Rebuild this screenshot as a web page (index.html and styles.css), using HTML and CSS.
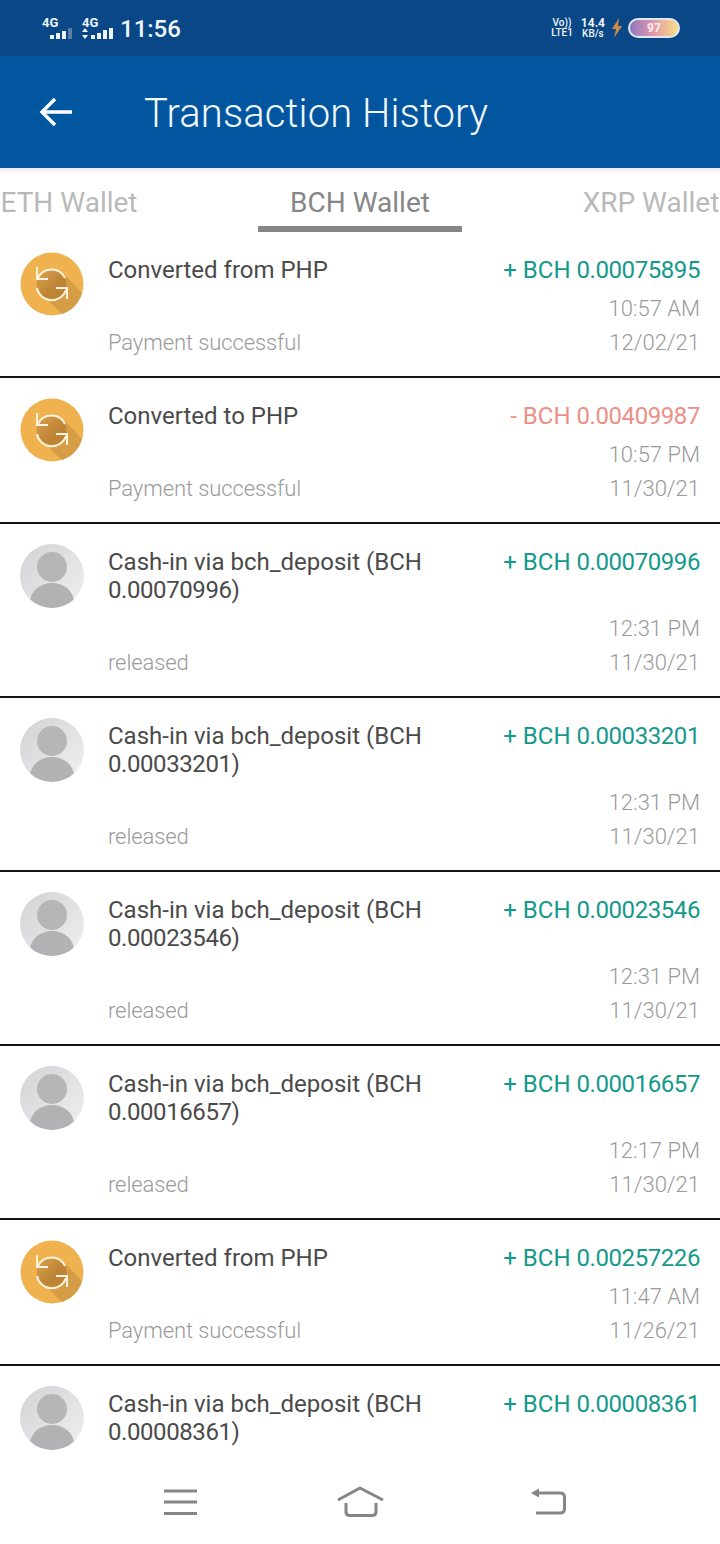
FILE: index.html
```html
<!DOCTYPE html>
<html lang="en">
<head>
    <meta charset="UTF-8">
    <meta name="viewport" content="width=device-width, initial-scale=1.0">
    <title>Transaction History</title>
    <link rel="stylesheet" href="styles.css">
</head>
<body>
    <svg class="defs" width="0" height="0">
        <defs>
            <linearGradient id="swapInner" x1="0" y1="0" x2="1" y2="1">
                <stop offset="0" stop-color="#dca550"/>
                <stop offset="0.6" stop-color="#bd8436"/>
            </linearGradient>
            <symbol id="swap" viewBox="0 0 64 64">
                <circle cx="32" cy="32" r="31.5" fill="#f0b24f"/>
                <path d="M19 40 L42 62 A31.5 31.5 0 0 0 62 41 L44 22 Z" fill="#d69d47"/>
                <circle cx="31.5" cy="32" r="15" fill="url(#swapInner)"/>
                <path d="M18 26 A15 15 0 0 1 45 26" fill="none" stroke="#fdf3dc" stroke-width="2"/>
                <path d="M46 38 A15 15 0 0 1 17 36" fill="none" stroke="#fdf3dc" stroke-width="2"/>
                <path d="M17 15 V27 H28" fill="none" stroke="#fdf3dc" stroke-width="2"/>
                <path d="M47 47 V36 H36" fill="none" stroke="#fdf3dc" stroke-width="2"/>
            </symbol>
            <linearGradient id="personBg" x1="0" y1="0" x2="1" y2="1">
                <stop offset="0" stop-color="#d2d2d5"/>
                <stop offset="1" stop-color="#f0f0f2"/>
            </linearGradient>
            <clipPath id="personClip"><circle cx="32" cy="32" r="32"/></clipPath>
            <symbol id="person" viewBox="0 0 64 64">
                <circle cx="32" cy="32" r="32" fill="url(#personBg)"/>
                <circle cx="32" cy="23" r="15" fill="#b6b6b9"/>
                <ellipse cx="32" cy="58" rx="22" ry="19" fill="#b2b2b5" clip-path="url(#personClip)"/>
            </symbol>
        </defs>
    </svg>

    <div class="status-bar">
        <div class="status-left">
            <div class="sim">
                <span class="sim-label">4G</span>
                <svg class="bars" width="24" height="11" viewBox="0 0 24 11"><path d="M0 7h4v4H0zM6 5h4v6H6zM12 3h4v8h-4z" fill="#eef5fb"/><path d="M18 0h4v11h-4z" fill="#5d7fa8"/></svg>
            </div>
            <div class="sim sim-two">
                <span class="sim-label">4G</span>
                <svg class="bars" width="32" height="11" viewBox="0 0 32 11"><path d="M0 4L3 0l3 4zM0 7h6l-3 4zM9 7h4v4H9zM15 5h4v6h-4zM21 2h4v9h-4zM27 0h4v11h-4z" fill="#eef5fb"/></svg>
            </div>
            <span class="clock">11:56</span>
        </div>
        <div class="status-right">
            <span class="tiny">Vo))<br>LTE1</span>
            <span class="tiny speed"><b>14.4</b><br>KB/s</span>
            <svg class="bolt" width="12" height="20" viewBox="0 0 12 20"><path d="M8 0 L1 11 L5 11 L3 20 L11 8 L7 8 Z" fill="#c98a4a"/></svg>
            <div class="battery"><span>97</span></div>
        </div>
    </div>

    <header class="app-bar">
        <svg class="back" width="34" height="32" viewBox="0 0 34 32"><path d="M33 16 H3 M16 3 L3 16 L16 29" fill="none" stroke="#fff" stroke-width="3.4"/></svg>
        <h1>Transaction History</h1>
    </header>

    <nav class="tabs">
        <div class="tab">ETH Wallet</div>
        <div class="tab active">BCH Wallet</div>
        <div class="tab">XRP Wallet</div>
    </nav>

    <main class="list">
        <div class="row">
            <svg class="avatar"><use href="#swap"/></svg>
            <div class="row-body">
                <div class="title">Converted from PHP</div>
                <div class="amount plus">+ BCH <span class="num">0.00075895</span></div>
                <div class="time">10:57 AM</div>
                <div class="status">Payment successful</div>
                <div class="date">12/02/21</div>
            </div>
        </div>
        <div class="row">
            <svg class="avatar"><use href="#swap"/></svg>
            <div class="row-body">
                <div class="title">Converted to PHP</div>
                <div class="amount minus">- BCH <span class="num">0.00409987</span></div>
                <div class="time">10:57 PM</div>
                <div class="status">Payment successful</div>
                <div class="date">11/30/21</div>
            </div>
        </div>
        <div class="row">
            <svg class="avatar"><use href="#person"/></svg>
            <div class="row-body">
                <div class="title">Cash-in via bch_deposit (BCH <span class="num">0.00070996)</span></div>
                <div class="amount plus">+ BCH <span class="num">0.00070996</span></div>
                <div class="time">12:31 PM</div>
                <div class="status">released</div>
                <div class="date">11/30/21</div>
            </div>
        </div>
        <div class="row">
            <svg class="avatar"><use href="#person"/></svg>
            <div class="row-body">
                <div class="title">Cash-in via bch_deposit (BCH <span class="num">0.00033201)</span></div>
                <div class="amount plus">+ BCH <span class="num">0.00033201</span></div>
                <div class="time">12:31 PM</div>
                <div class="status">released</div>
                <div class="date">11/30/21</div>
            </div>
        </div>
        <div class="row">
            <svg class="avatar"><use href="#person"/></svg>
            <div class="row-body">
                <div class="title">Cash-in via bch_deposit (BCH <span class="num">0.00023546)</span></div>
                <div class="amount plus">+ BCH <span class="num">0.00023546</span></div>
                <div class="time">12:31 PM</div>
                <div class="status">released</div>
                <div class="date">11/30/21</div>
            </div>
        </div>
        <div class="row">
            <svg class="avatar"><use href="#person"/></svg>
            <div class="row-body">
                <div class="title">Cash-in via bch_deposit (BCH <span class="num">0.00016657)</span></div>
                <div class="amount plus">+ BCH <span class="num">0.00016657</span></div>
                <div class="time">12:17 PM</div>
                <div class="status">released</div>
                <div class="date">11/30/21</div>
            </div>
        </div>
        <div class="row">
            <svg class="avatar"><use href="#swap"/></svg>
            <div class="row-body">
                <div class="title">Converted from PHP</div>
                <div class="amount plus">+ BCH <span class="num">0.00257226</span></div>
                <div class="time">11:47 AM</div>
                <div class="status">Payment successful</div>
                <div class="date">11/26/21</div>
            </div>
        </div>
        <div class="row">
            <svg class="avatar"><use href="#person"/></svg>
            <div class="row-body">
                <div class="title">Cash-in via bch_deposit (BCH <span class="num">0.00008361)</span></div>
                <div class="amount plus">+ BCH <span class="num">0.00008361</span></div>
            </div>
        </div>
    </main>

    <footer class="nav-bar">
        <svg width="36" height="28" viewBox="0 0 36 28"><path d="M2 3 H35 M2 14 H35 M2 25.5 H35" fill="none" stroke="#868686" stroke-width="3"/></svg>
        <svg class="nav-home" width="50" height="32" viewBox="0 0 50 32"><path d="M3 14 L25 2 L48 14" fill="none" stroke="#868686" stroke-width="3" stroke-linejoin="round"/><path d="M11 17 V26 Q11 29.5 15 29.5 H37 Q41 29.5 41 26 V17" fill="none" stroke="#868686" stroke-width="3"/></svg>
        <svg width="36" height="28" viewBox="0 0 36 28"><path d="M1 5 L9 0.5 V9.5 Z" fill="#868686"/><path d="M8 5 H30 Q34.5 5 34.5 9 V21 Q34.5 25 30 25 H6" fill="none" stroke="#868686" stroke-width="3"/></svg>
    </footer>
</body>
</html>
```

FILE: styles.css
```css
* {
    box-sizing: border-box;
}
body {
    margin: 0;
    height: 1544px;
    display: flex;
    flex-direction: column;
    overflow: hidden;
    background: #fff;
    font-family: Roboto, sans-serif;
}
.defs {
    position: absolute;
}

/* status bar */
.status-bar {
    height: 56px;
    flex-shrink: 0;
    display: flex;
    justify-content: space-between;
    align-items: center;
    padding: 0 40px 0 42px;
    background: #0a4787;
    color: #eef5fb;
}
.status-left,
.status-right {
    display: flex;
    align-items: center;
}
.sim {
    width: 40px;
    display: flex;
    flex-direction: column;
}
.sim-label {
    font-size: 13px;
    font-weight: 700;
    line-height: 11px;
}
.bars {
    margin-left: 8px;
}
.sim-two {
    width: 32px;
}
.sim-two .bars {
    margin-left: 0;
}
.clock {
    margin: 2px 0 0 6px;
    font-size: 24px;
    font-weight: 500;
}
.tiny {
    margin-left: -2px;
    font-size: 10px;
    font-weight: 500;
    line-height: 10px;
    text-align: center;
}
.speed {
    margin-left: 8px;
}
.speed b {
    font-size: 12px;
    font-weight: 700;
}
.bolt {
    margin-left: 6px;
}
.battery {
    width: 52px;
    height: 20px;
    margin-left: 5px;
    border: 2px solid #dfe8f2;
    border-radius: 10px;
    background: linear-gradient(to right, #8d78c0, #e49aa8 50%, #f8de88);
    color: #fbeff0;
    font-size: 12px;
    font-weight: 700;
    line-height: 16px;
    text-align: center;
}

/* app bar */
.app-bar {
    height: 112px;
    flex-shrink: 0;
    display: flex;
    align-items: center;
    padding-left: 39px;
    background: #02569f;
    color: #f2f8fd;
}
.back {
    flex-shrink: 0;
}
.app-bar h1 {
    margin: 2px 0 0 71px;
    font-size: 40px;
    font-weight: 300;
    letter-spacing: 0.1px;
}

/* tabs */
.tabs {
    height: 64px;
    flex-shrink: 0;
    display: flex;
    justify-content: center;
    gap: 87px;
    overflow: hidden;
    box-shadow: inset 0 5px 4px -3px rgba(0, 0, 0, 0.1);
}
.tab {
    width: 204px;
    flex-shrink: 0;
    padding-top: 18px;
    color: #b9b9b9;
    font-size: 28px;
    line-height: 34px;
    text-align: center;
}
.tab.active {
    color: #868686;
    border-bottom: 6px solid #868686;
}

/* list */
.list {
    flex: 1;
    overflow: hidden;
}
.row {
    display: flex;
    gap: 24px;
    padding: 20px 20px 16px;
    border-bottom: 2px solid #141414;
}
.avatar {
    width: 64px;
    height: 64px;
    flex-shrink: 0;
}
.row-body {
    flex: 1;
    display: grid;
    grid-template-columns: 1fr auto;
    padding-top: 4px;
}
.title {
    color: #4a4a4a;
    font-size: 24px;
    line-height: 28px;
}
.amount {
    font-size: 24px;
    line-height: 28px;
}
.num {
    letter-spacing: -0.42px;
}
.plus {
    color: #14998a;
}
.minus {
    color: #ec9087;
}
.time,
.date {
    grid-column: 2;
    color: #9a9a9a;
    font-size: 22px;
    font-weight: 300;
    line-height: 34px;
    text-align: right;
}
.time {
    margin-top: 8px;
}
.status {
    grid-column: 1;
    color: #9a9a9a;
    font-size: 22px;
    font-weight: 300;
    letter-spacing: -0.1px;
    line-height: 34px;
}

/* bottom navigation */
.nav-bar {
    height: 84px;
    flex-shrink: 0;
    display: flex;
    align-items: center;
    padding-left: 162px;
    background: #fff;
}
.nav-home {
    margin: 0 145px 0 137px;
}
```
